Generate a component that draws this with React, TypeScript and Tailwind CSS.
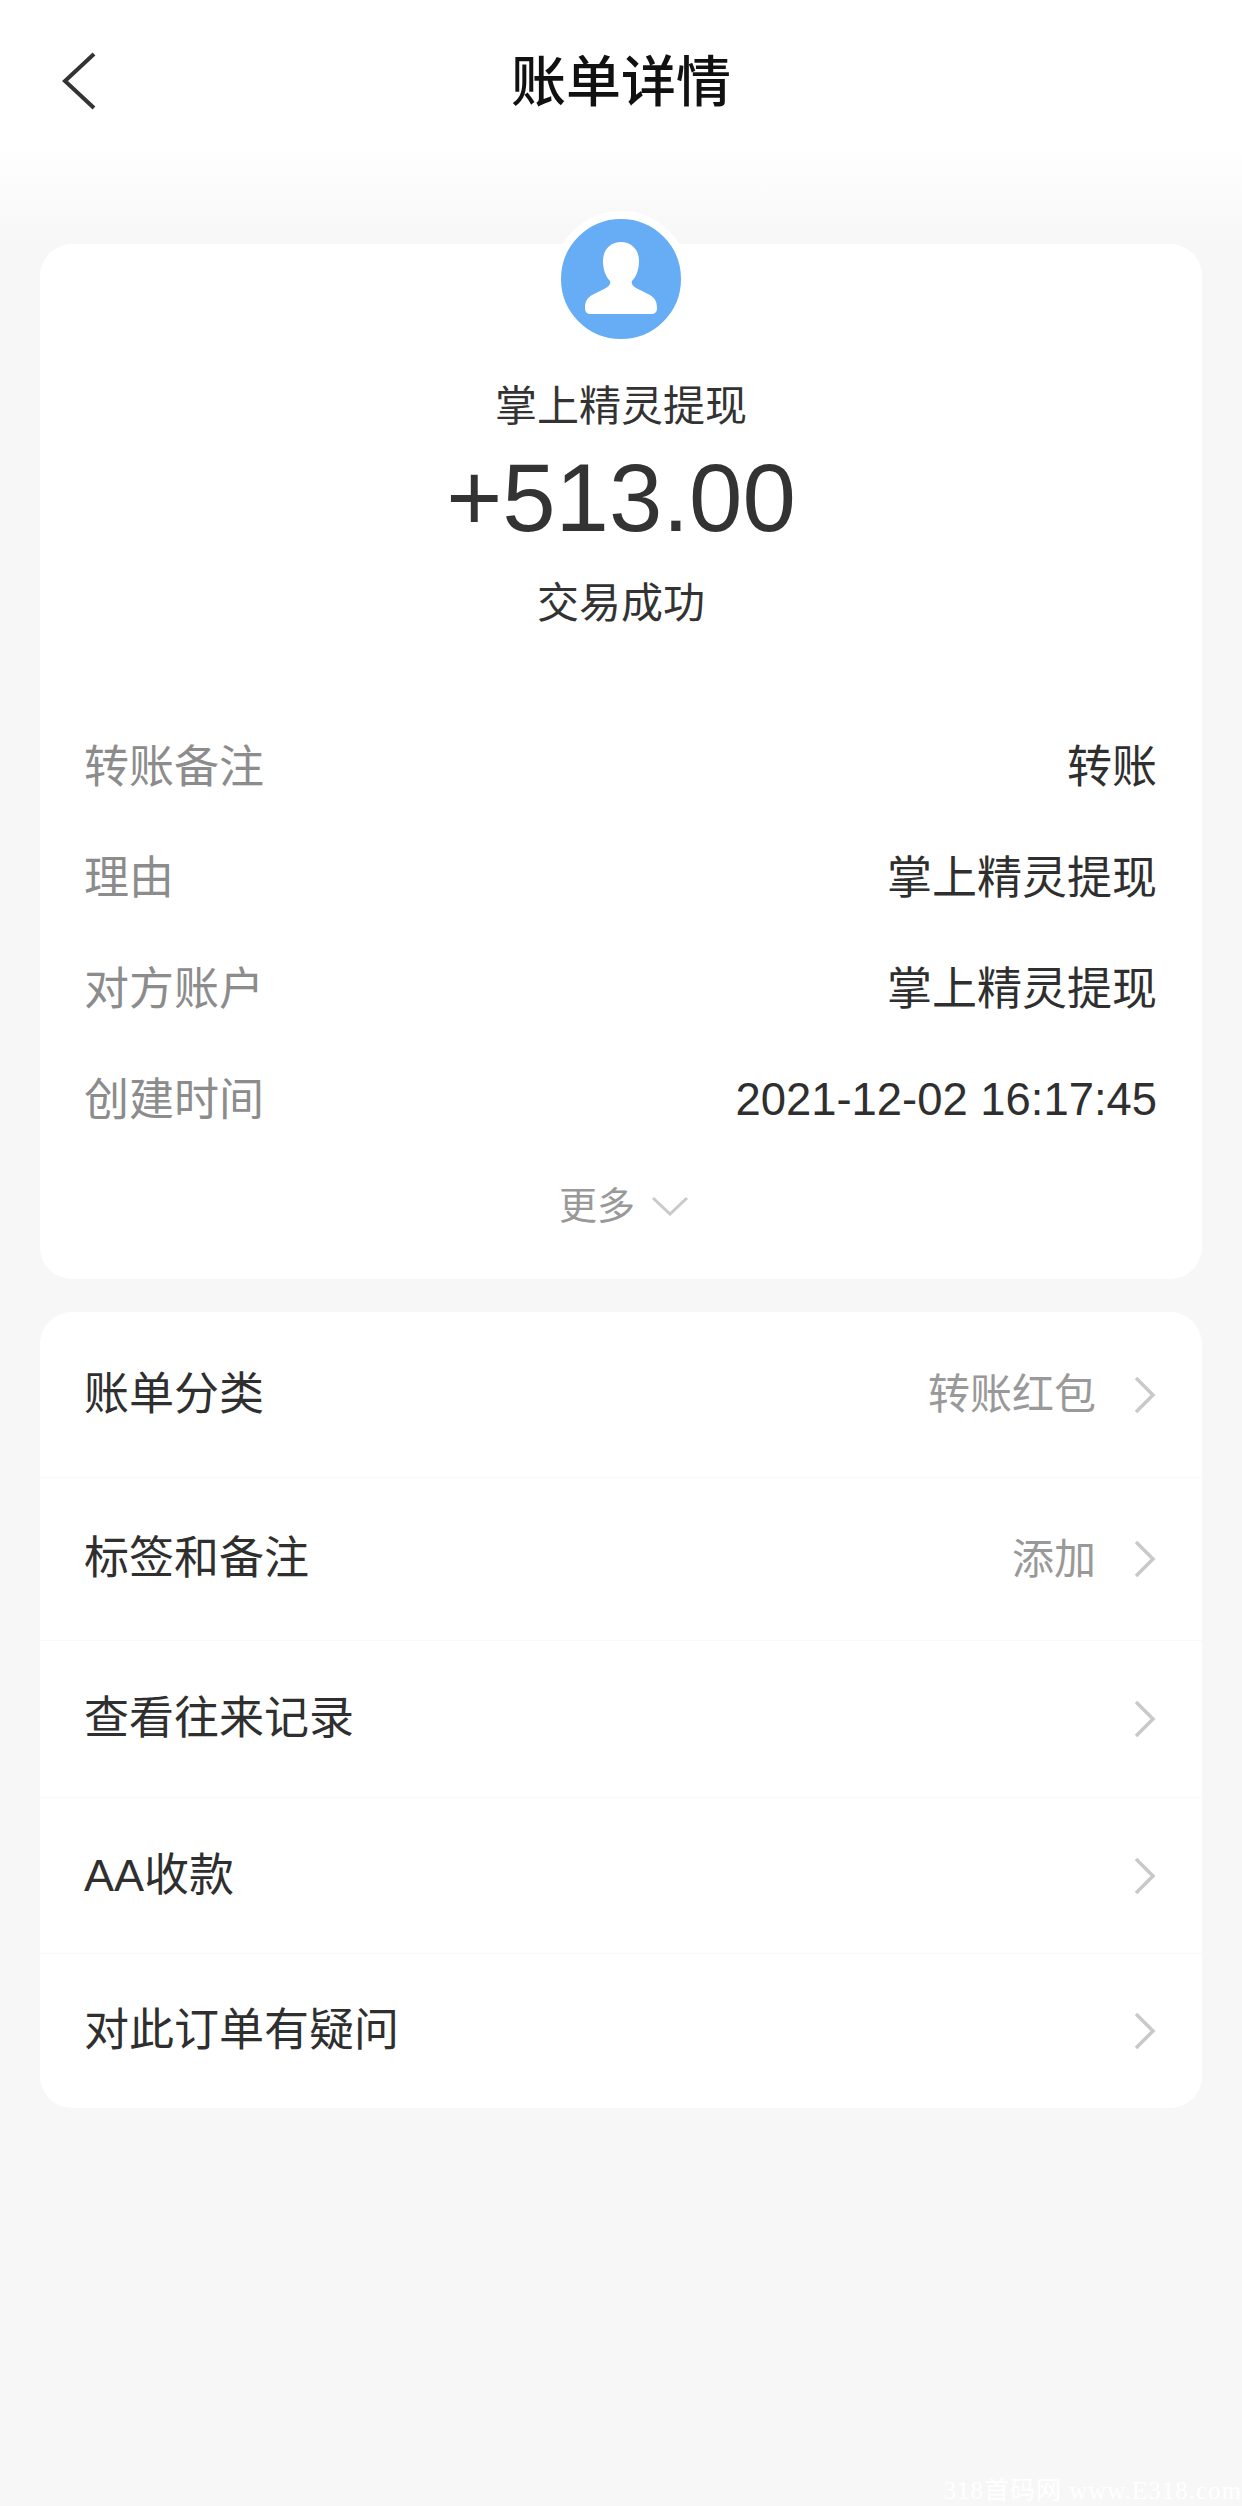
const FONT = "font-['Liberation_Sans','Noto_Sans_CJK_SC',sans-serif]"

const details = [
  { label: '转账备注', value: '转账' },
  { label: '理由', value: '掌上精灵提现' },
  { label: '对方账户', value: '掌上精灵提现' },
  { label: '创建时间', value: '2021-12-02 16:17:45', numeric: true },
]

const actions = [
  { label: '账单分类', value: '转账红包', height: 'h-[165px]' },
  { label: '标签和备注', value: '添加', height: 'h-[163px]' },
  { label: '查看往来记录', height: 'h-[157px]' },
  { label: 'AA收款', height: 'h-[156px]' },
  { label: '对此订单有疑问', height: 'h-[155px]' },
]

function Avatar() {
  return (
    <div className="h-[136px] w-[136px] rounded-full border-8 border-white bg-[#66adf5]">
      <svg viewBox="0 0 120 120" className="h-full w-full" aria-hidden>
        <path
          fill="#fff"
          d="M60 23c-10 0-18 7-18 19 0 9 3 16 7 20 1 3-1 5-4 7l-14 7c-5 3-7 7-7 13 0 4 2 6 6 6h60c4 0 6-2 6-6 0-6-2-10-7-13l-14-7c-3-2-5-4-4-7 4-4 7-11 7-20 0-12-8-19-18-19z"
        />
      </svg>
    </div>
  )
}

function RowChevron() {
  return (
    <svg viewBox="0 0 22 38" className="h-[38px] w-[22px] shrink-0" fill="none" aria-hidden>
      <path d="M2 2l17 17L2 36" stroke="#c9c9c9" strokeWidth="3.5" />
    </svg>
  )
}

export default function App() {
  return (
    <div className={`relative flex h-[2506px] w-[1242px] flex-col overflow-hidden bg-[#f7f7f7] ${FONT}`}>
      <header className="relative flex h-[244px] shrink-0 justify-center bg-[linear-gradient(to_bottom,#ffffff_0px,#ffffff_140px,#f7f7f7_244px)] pt-[47px]">
        <svg viewBox="0 0 34 58" className="absolute left-[62px] top-[52px] h-[58px] w-[34px]" fill="none" aria-hidden>
          <path d="M32 2L3 29l29 27" stroke="#333" strokeWidth="4" />
        </svg>
        <h1 className="text-[55px] leading-[70px] font-medium text-[#111]">账单详情</h1>
      </header>

      <section className="relative mx-10 flex flex-col items-center rounded-[32px] bg-white">
        <div className="-mt-[33px]">
          <Avatar />
        </div>
        <p className="mt-[30px] text-[42px] leading-[60px] text-[#333]">掌上精灵提现</p>
        <p className="mt-[6px] text-[96px] leading-[110px] text-[#333]">+513.00</p>
        <p className="mt-[21px] text-[42px] leading-[60px] text-[#333]">交易成功</p>
        <div className="mt-[78px] w-full pr-[45px] pl-[44px]">
          {details.map((d) => (
            <div key={d.label} className="flex h-[111px] items-center justify-between">
              <span className="text-[45px] text-[#8c8c8c]">{d.label}</span>
              <span className={`${d.numeric ? 'text-[45.4px]' : 'text-[45px]'} text-[#2f2f2f]`}>{d.value}</span>
            </div>
          ))}
        </div>
        <div className="mt-[25px] mb-[48px] ml-[6px] flex h-[50px] items-center gap-4 text-[38px] text-[#999]">
          <span>更多</span>
          <svg viewBox="0 0 38 20" className="h-5 w-[38px]" fill="none" aria-hidden>
            <path d="M2 2l17 16L36 2" stroke="#c9c9c9" strokeWidth="3" />
          </svg>
        </div>
      </section>

      <section className="mx-10 mt-[33px] rounded-[32px] bg-white">
        {actions.map((a, i) => (
          <div
            key={a.label}
            className={`flex items-center justify-between pr-[46px] pl-[44px] ${a.height} ${i > 0 ? 'border-t border-[#f9f9f9]' : ''}`}
          >
            <span className="text-[45px] text-[#2f2f2f]">{a.label}</span>
            <div className="flex items-center gap-[38px]">
              {a.value && <span className="text-[42px] text-[#999]">{a.value}</span>}
              <RowChevron />
            </div>
          </div>
        ))}
      </section>

      <span className="absolute right-0 bottom-0 font-['Liberation_Serif','Noto_Sans_CJK_SC',serif] text-[25px] leading-[30px] tracking-[1px] whitespace-nowrap text-white">
        318首码网 www.E318.com
      </span>
    </div>
  )
}
